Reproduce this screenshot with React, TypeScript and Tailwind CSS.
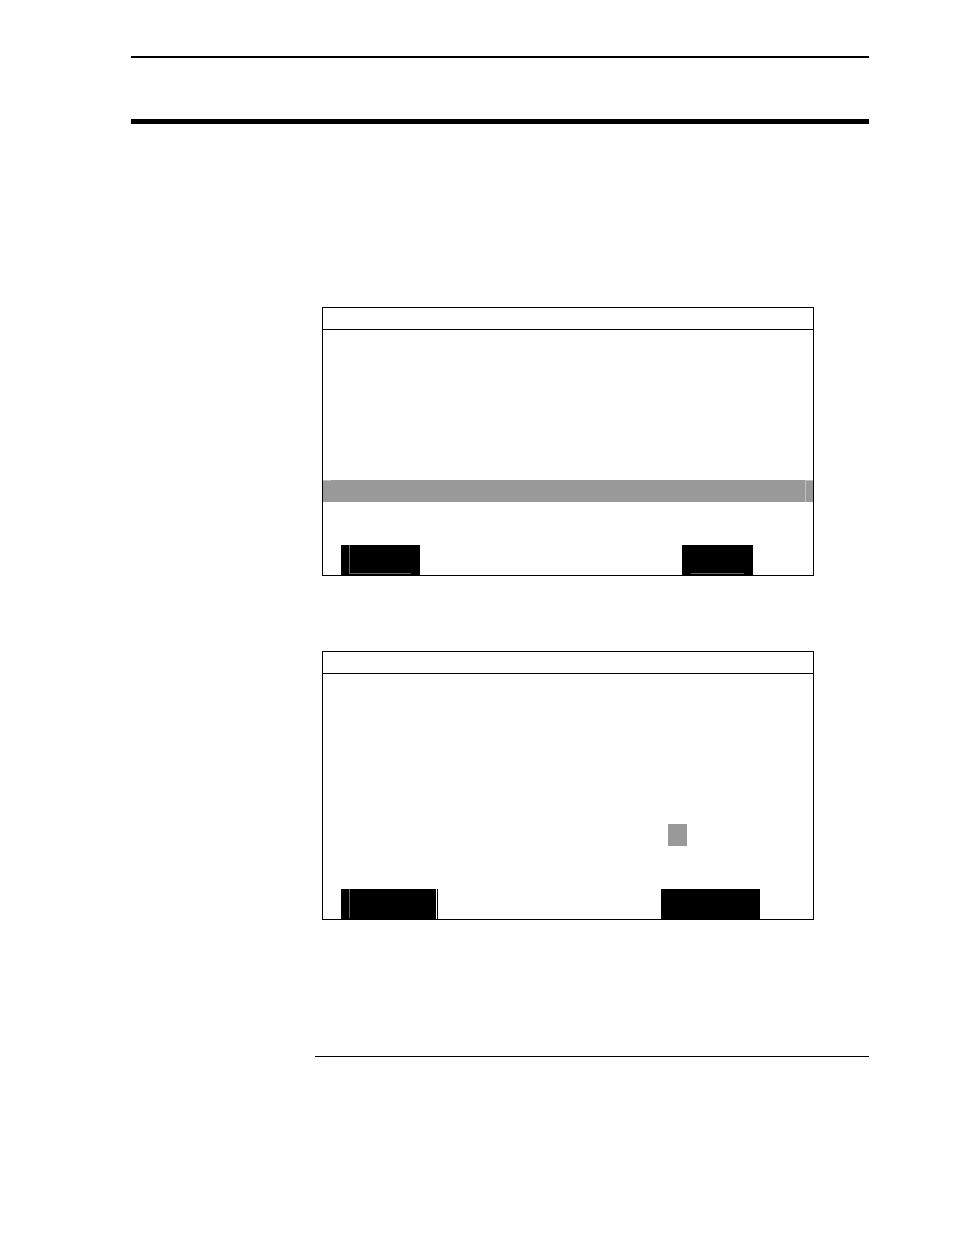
import type { ReactNode } from 'react';
import { clsx } from 'clsx';

type SoftKeyProps = {
  label: string;
  className: string;
  children?: ReactNode;
};

function SoftKey({ label, className, children }: SoftKeyProps) {
  return (
    <button
      type="button"
      aria-label={label}
      className={clsx('flex h-[30px] bg-black', className)}
    >
      {children}
    </button>
  );
}

type ScreenProps = {
  label: string;
  row: ReactNode;
  keys: ReactNode;
};

// Title strip, blank body, one active row, then the soft keys on the bottom edge
function Screen({ label, row, keys }: ScreenProps) {
  return (
    <section aria-label={label} className="border border-black">
      <header className="h-[22px] border-b border-black" />
      <div className="pt-[150px]">{row}</div>
      <div className="flex justify-between pt-[43px] pl-[18px]">{keys}</div>
    </section>
  );
}

function SelectedRow() {
  return (
    <div className="flex h-[22px] bg-[#999999]">
      <span className="h-px w-2 bg-[#c0c0c0]" />
      <span className="flex-1" />
      <span className="w-2 border-t border-l border-[#c0c0c0]" />
    </div>
  );
}

function EntryRow() {
  return (
    <div className="flex justify-end pr-[126px]">
      <span className="h-[22px] w-[19px] bg-[#999999]" />
    </div>
  );
}

export default function App() {
  return (
    <div className="min-h-screen bg-white pt-14 pr-[85px] pb-44 pl-[131px] font-['Liberation_Sans',Arial,sans-serif] text-black">
      <header className="h-[68px] border-t-2 border-b-[5px] border-black" />

      <main className="flex flex-col gap-[75px] pt-[183px] pr-[55px] pl-[191px]">
        <Screen
          label="Menu screen"
          row={<SelectedRow />}
          keys={
            <>
              <SoftKey label="Menu left key" className="w-[79px] pr-[9px] pl-2">
                <span className="h-[29px] flex-1 border-b border-l border-[#666666]" />
              </SoftKey>
              <SoftKey label="Menu right key" className="mr-[60px] w-[71px] px-[9px]">
                <span className="h-[29px] flex-1 border-b border-[#666666]" />
              </SoftKey>
            </>
          }
        />
        <Screen
          label="Entry screen"
          row={<EntryRow />}
          keys={
            <>
              <div className="flex gap-px">
                <SoftKey label="Entry left key" className="w-[95px] pl-2">
                  <span className="h-[29px] w-px bg-[#666666]" />
                </SoftKey>
                <span className="w-px bg-black" />
              </div>
              <SoftKey label="Entry right key" className="mr-[53px] w-[99px]" />
            </>
          }
        />
      </main>

      <footer className="mt-[136px] ml-[184px] border-t border-black" />
    </div>
  );
}
